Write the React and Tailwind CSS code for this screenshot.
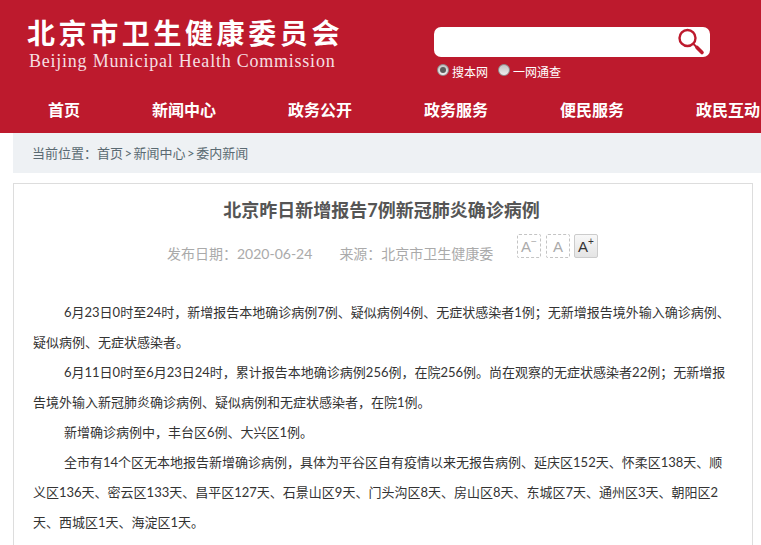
const CJK = { fontFamily: '"Noto Sans CJK SC", "Liberation Sans", sans-serif' };
const TXT = { fontFamily: 'Lato, "Noto Sans CJK SC", "Liberation Sans", sans-serif' };
const NAV = ["首页", "新闻中心", "政务公开", "政务服务", "便民服务", "政民互动"];
const PARAS = [
  "6月23日0时至24时，新增报告本地确诊病例7例、疑似病例4例、无症状感染者1例；无新增报告境外输入确诊病例、疑似病例、无症状感染者。",
  "6月11日0时至6月23日24时，累计报告本地确诊病例256例，在院256例。尚在观察的无症状感染者22例；无新增报告境外输入新冠肺炎确诊病例、疑似病例和无症状感染者，在院1例。",
  "新增确诊病例中，丰台区6例、大兴区1例。",
  "全市有14个区无本地报告新增确诊病例，具体为平谷区自有疫情以来无报告病例、延庆区152天、怀柔区138天、顺义区136天、密云区133天、昌平区127天、石景山区9天、门头沟区8天、房山区8天、东城区7天、通州区3天、朝阳区2天、西城区1天、海淀区1天。",
];

function Radio({ on }) {
  return (
    <span className="relative block shrink-0 -mt-[5px] w-[12px] h-[12px] rounded-full border border-[#8e8e8e] bg-gradient-to-b from-[#c4c4c4] to-[#eeeeee]">
      {on && <span className="absolute left-[2px] top-[2px] w-[6px] h-[6px] rounded-full bg-[#5c5c5c]" />}
    </span>
  );
}

function SizeBtn({ label, sup, active, className = "" }) {
  return (
    <div
      className={
        (active
          ? "flex items-center justify-center w-[24px] h-[24px] border border-[#cccccc] rounded-[2px] bg-gradient-to-b from-[#f8f8f8] to-[#e4e4e4] text-[#333333] "
          : "flex items-center justify-center w-[24px] h-[24px] border border-dashed border-[#c4c4c4] rounded-[2px] text-[#aaaaaa] ") + className
      }
      style={{ fontFamily: '"Liberation Sans", sans-serif' }}
    >
      <span className="text-[15px] leading-none">{label}</span>
      {sup && <span className="text-[10px] leading-none -mt-[9px]">{sup}</span>}
    </div>
  );
}

export default function App() {
  return (
    <div className="w-[761px] h-[545px] overflow-hidden bg-white" style={CJK}>
      <header className="h-[133px] bg-[#bd1a2d] text-white flex flex-col">
        <div className="flex h-[97px] shrink-0">
          <div className="w-[434px] pl-[27px] pt-[12px] shrink-0">
            <div className="text-[28px] leading-[40px] font-bold tracking-[3.6px] whitespace-nowrap">北京市卫生健康委员会</div>
            <div
              className="text-[18px] leading-[20px] -mt-[1px] tracking-[0.77px] pl-[2px] whitespace-nowrap text-[#f5dfe2]"
              style={{ fontFamily: '"Liberation Serif", serif' }}
            >
              Beijing Municipal Health Commission
            </div>
          </div>
          <div className="pt-[27px]">
            <div className="relative w-[276px] h-[30px] bg-white rounded-[7px]">
              <svg className="absolute left-[243px] top-[1px]" width="28" height="28" viewBox="0 0 28 28" fill="none">
                <circle cx="10.5" cy="10" r="8" stroke="#bd1a2d" strokeWidth="2.4" />
                <path d="M16.5 16L20 19.5" stroke="#bd1a2d" strokeWidth="2" />
                <path d="M20 19.5L25 24.5" stroke="#bd1a2d" strokeWidth="3.6" strokeLinecap="round" />
              </svg>
            </div>
            <div className="flex items-center mt-[6px] pl-[3px] text-[12px] leading-[18px]">
              <Radio on />
              <span className="ml-[3px] w-[46px]">搜本网</span>
              <Radio />
              <span className="ml-[3px]">一网通查</span>
            </div>
          </div>
        </div>
        <nav className="flex gap-[72px] pl-[48px] text-[16px] leading-[24px] font-bold whitespace-nowrap">
          {NAV.map((n) => (
            <span key={n}>{n}</span>
          ))}
        </nav>
      </header>

      <div className="ml-[13px] h-[40px] bg-[#eef1f4] pl-[19px] pt-[2px] flex items-center text-[13px] text-[#5a6a72]" style={TXT}>
        当前位置：首页<span className="px-[1.5px]">&gt;</span>新闻中心<span className="px-[1.5px]">&gt;</span>委内新闻
      </div>

      <main className="ml-[13px] mr-[8px] mt-[10px] border border-[#dddddd] border-b-0 h-[400px] pl-[19px] pr-[22px]" style={TXT}>
        <h1 className="mt-[13px] text-center text-[18px] leading-[26px] font-bold text-[#555555]">
          北京昨日新增报告7例新冠肺炎确诊病例
        </h1>
        <div className="flex mt-[11px] h-[40px]">
          <div className="flex w-[484px] shrink-0 pl-[134px] pt-[10px] text-[14px] leading-[20px] text-[#aaaaaa] whitespace-nowrap">
            <span>发布日期：2020-06-24</span>
            <span className="ml-[27px]">来源：北京市卫生健康委</span>
          </div>
          <div className="flex">
            <SizeBtn label="A" sup="−" />
            <SizeBtn label="A" className="ml-[5px]" />
            <SizeBtn label="A" sup="+" active className="ml-[4px]" />
          </div>
        </div>
        <article className="mt-[23px] text-[13px] leading-[30px] text-[#333333]">
          {PARAS.map((t, i) => (
            <p key={i} className="indent-[31px]">
              {t}
            </p>
          ))}
        </article>
      </main>
    </div>
  );
}
